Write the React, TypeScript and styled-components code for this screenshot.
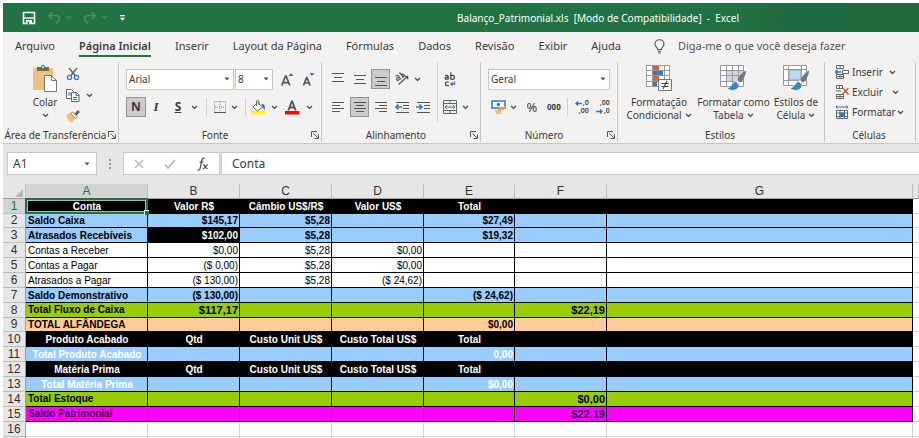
import React from "react";
import styled, { createGlobalStyle, css } from "styled-components";

const GlobalStyle = createGlobalStyle`
  *, *::before, *::after { box-sizing: border-box; }
  body { margin: 0; background: #fff; }
  button, input, select { font: inherit; color: inherit; margin: 0; }
`;

const ui = `"Noto Sans", "Open Sans", sans-serif`;
const sheetFont = `"Liberation Sans", Arial, sans-serif`;

const Window = styled.div`
  padding: 3px 0 0 3px;
  font: 10px/14px ${ui};
  color: #3b3a39;
`;

/* ---------- Title bar ---------- */

const TitleBar = styled.header`
  display: flex;
  align-items: center;
  height: 29px;
  color: #fff;
  background: radial-gradient(ellipse 34px 28px at 813px 16px, #1f6a41 96%, transparent 100%),
    linear-gradient(90deg, #217346 80%, #21683f 86%, #21683f 100%);
`;

const QuickAccess = styled.div`
  display: flex;
  align-items: center;
  gap: 11px;
  flex: 0 0 274px;
  padding-left: 19px;
`;

const QuickCluster = styled.div`
  display: flex;
  align-items: center;
  gap: 4px;
`;

const QuickButton = styled.button<{ $faded?: boolean }>`
  display: flex;
  align-items: center;
  justify-content: center;
  height: 20px;
  padding: 0;
  border: 0;
  background: none;
  color: ${(p) => (p.$faded ? "#4d9069" : "#fff")};
`;

const Title = styled.h1`
  flex: 1;
  margin: 0;
  font-size: 10px;
  line-height: 14px;
  font-weight: 400;
  text-align: center;
  white-space: pre;
`;

/* ---------- Tabs ---------- */

const Tabs = styled.nav`
  display: flex;
  align-items: flex-start;
  gap: 24px;
  height: 28px;
  padding: 5px 0 0 12px;
  background: #f3f2f1;
`;

const Tab = styled.button<{ $active?: boolean }>`
  flex: none;
  height: 20px;
  padding: 0;
  border: 0;
  border-bottom: 2px solid ${(p) => (p.$active ? "#217346" : "transparent")};
  background: none;
  font-size: 11px;
  line-height: 18px;
  font-weight: ${(p) => (p.$active ? 600 : 400)};
  white-space: nowrap;
`;

const TellMe = styled.button`
  display: flex;
  align-items: center;
  gap: 13px;
  height: 18px;
  margin-left: 9px;
  padding: 0;
  border: 0;
  background: none;
  font-size: 11px;
  line-height: 18px;
  white-space: nowrap;
  color: #555;
`;

/* ---------- Ribbon ---------- */

const Ribbon = styled.section`
  display: flex;
  padding: 2px 0 1px;
  background: #f3f2f1;
  border-bottom: 1px solid #c8c6c4;
`;

const GroupBox = styled.div<{ $w: number }>`
  display: grid;
  grid-template-rows: 66px 14px;
  flex: 0 0 ${(p) => p.$w}px;
  border-right: 1px solid #c8c6c4;
`;

const GroupFooter = styled.div`
  display: flex;
  align-items: center;
  padding-right: 2px;
`;

const GroupLabel = styled.span`
  flex: 1;
  text-align: center;
  font-size: 10px;
  line-height: 14px;
  white-space: nowrap;
`;

const Launcher = styled.button`
  display: flex;
  padding: 0;
  border: 0;
  background: none;
`;

const ToolStack = styled.div<{ $left?: number }>`
  display: flex;
  flex-direction: column;
  gap: 8px;
  padding: 7px 0 0 ${(p) => p.$left ?? 7}px;
`;

const ToolRow = styled.div`
  display: flex;
  align-items: center;
  height: 20px;
`;

const Columns = styled.div`
  display: flex;
`;

const Tool = styled.button<{ $w: number; $on?: boolean }>`
  display: flex;
  align-items: center;
  justify-content: center;
  flex: 0 0 ${(p) => p.$w}px;
  height: 20px;
  padding: 0;
  border: 1px solid transparent;
  background: none;
  ${(p) =>
    p.$on &&
    css`
      background: #cdcbc9;
      border-color: #979593;
    `}
`;

const Gap = styled.span<{ $w: number }>`
  flex: 0 0 ${(p) => p.$w}px;
`;

const Divider = styled.span<{ $w: number; $h?: number }>`
  flex: 0 0 ${(p) => p.$w}px;
  height: ${(p) => p.$h ?? 18}px;
  background: linear-gradient(#d2d0ce, #d2d0ce) center / 1px 100% no-repeat;
`;

const Glyph = styled.span<{ $size?: number; $bold?: boolean; $italic?: boolean; $under?: boolean }>`
  font-size: ${(p) => p.$size ?? 12}px;
  line-height: 16px;
  font-weight: ${(p) => (p.$bold ? 700 : 400)};
  font-style: ${(p) => (p.$italic ? "italic" : "normal")};
  font-family: ${(p) => (p.$italic ? `"Liberation Serif", serif` : ui)};
  text-decoration: ${(p) => (p.$under ? "underline" : "none")};
`;

const Combo = styled.label<{ $w: number }>`
  display: grid;
  align-items: center;
  flex: 0 0 ${(p) => p.$w}px;
  height: 21px;
  background: #fff;
  border: 1px solid #c8c6c4;
  > * { grid-area: 1 / 1; }
  > svg { justify-self: end; margin-right: 3px; pointer-events: none; }
`;

const ComboSelect = styled.select`
  appearance: none;
  width: 100%;
  height: 19px;
  padding: 0 2px;
  border: 0;
  background: none;
  font-size: 10px;
  outline: none;
`;

const PasteArea = styled.div`
  display: flex;
  gap: 5px;
  padding: 2px 0 0 27px;
`;

const LargeButton = styled.button<{ $w: number }>`
  display: flex;
  flex-direction: column;
  align-items: center;
  flex: 0 0 ${(p) => p.$w}px;
  padding: 0;
  border: 0;
  background: none;
  font-size: 10px;
  line-height: 13px;
  white-space: nowrap;
  > svg { flex: none; margin-bottom: 4px; }
`;

const LabelLine = styled.span`
  display: flex;
  align-items: center;
  justify-content: center;
  gap: 3px;
  height: 13px;
`;

const SmallStack = styled.div`
  display: flex;
  flex-direction: column;
  gap: 1px;
`;

const StyleButtons = styled.div`
  display: flex;
  padding: 3px 0 0 3px;
`;

const CellMenu = styled.div`
  display: flex;
  flex-direction: column;
  padding-left: 10px;
`;

const CellButton = styled.button`
  display: flex;
  align-items: center;
  gap: 3px;
  height: 20px;
  padding: 0;
  border: 0;
  background: none;
  font-size: 10px;
  white-space: nowrap;
`;

const CellText = styled.span<{ $w: number }>`
  width: ${(p) => p.$w}px;
  text-align: left;
`;

/* ---------- Formula bar ---------- */

const FormulaBar = styled.div`
  display: flex;
  align-items: center;
  padding: 8px 0 9px 4px;
  background: #e6e6e6;
`;

const NameBox = styled.label`
  display: flex;
  align-items: center;
  flex: 0 0 90px;
  height: 23px;
  padding: 0 6px 0 5px;
  background: #fff;
  border: 1px solid #c8c8c8;
`;

const BarInput = styled.input`
  flex: 1;
  min-width: 0;
  width: 100%;
  height: 21px;
  padding: 0;
  border: 0;
  background: none;
  font-size: 12px;
  outline: none;
`;

const Dots = styled.span`
  flex: 0 0 26px;
  display: flex;
  justify-content: center;
`;

const FormulaTools = styled.div`
  display: flex;
  align-items: center;
  justify-content: space-around;
  flex: 0 0 97px;
  height: 23px;
  background: #fff;
  border: 1px solid #c8c8c8;
`;

const IconButton = styled.button`
  display: flex;
  padding: 0;
  border: 0;
  background: none;
`;

const FormulaField = styled.label`
  display: flex;
  flex: 1;
  min-width: 0;
  height: 23px;
  margin-left: 1px;
  padding-left: 10px;
  background: #fff;
  border: 1px solid #c8c8c8;
  border-right: 0;
`;

/* ---------- Sheet ---------- */

const Sheet = styled.table`
  width: 100%;
  table-layout: fixed;
  border-collapse: separate;
  border-spacing: 0;
  background: #fff;
  font-family: ${sheetFont};
  color: #000;
`;

const Col = styled.col<{ $w?: number }>`
  width: ${(p) => (p.$w ? `${p.$w}px` : "auto")};
`;

const ColHead = styled.th<{ $on?: boolean }>`
  height: 15px;
  padding: 0;
  background: ${(p) => (p.$on ? "#d2d2d2" : "#e6e6e6")};
  border-right: 1px solid #bdbdbd;
  border-bottom: 1px solid ${(p) => (p.$on ? "#217346" : "#9f9f9f")};
  font-size: 12px;
  line-height: 14px;
  font-weight: 400;
  color: ${(p) => (p.$on ? "#217346" : "#333")};
`;

const Corner = styled(ColHead)`
  > svg { display: block; margin: 3px 2px 0 auto; }
`;

const RowHead = styled.th<{ $on?: boolean }>`
  padding: 0;
  background: ${(p) => (p.$on ? "#d2d2d2" : "#e6e6e6")};
  border-right: 1px solid ${(p) => (p.$on ? "#217346" : "#9f9f9f")};
  border-bottom: 1px solid #bdbdbd;
  font-size: 12px;
  line-height: 13px;
  font-weight: 400;
  color: ${(p) => (p.$on ? "#217346" : "#333")};
`;

type Tone = "head" | "blue" | "plain" | "green" | "peach" | "ghost" | "pink" | "blank";

const toneBg: Record<Tone, string> = {
  head: "#000",
  blue: "#99ccff",
  plain: "#fff",
  green: "#99cc00",
  peach: "#ffcc99",
  ghost: "#99ccff",
  pink: "#ff00ff",
  blank: "#fff",
};

const Row = styled.tr<{ $h: number }>`
  height: ${(p) => p.$h}px;
`;

const Cell = styled.td<{ $tone: Tone; $inverse?: boolean; $first?: boolean }>`
  position: relative;
  padding: ${(p) => (p.$tone === "green" || p.$tone === "pink" ? 0 : 1)}px 1px 0 2px;
  background: ${(p) => (p.$inverse ? "#000" : toneBg[p.$tone])};
  color: ${(p) =>
    p.$inverse || p.$tone === "head" || p.$tone === "ghost"
      ? "#fff"
      : p.$tone === "pink"
      ? "#3a0045"
      : "#000"};
  border-right: 1px solid ${(p) => (p.$tone === "blank" ? "#d4d4d4" : "#000")};
  border-bottom: 1px solid ${(p) => (p.$tone === "blank" ? "#d4d4d4" : "#000")};
  font-size: ${(p) => (!p.$first && (p.$tone === "green" || p.$tone === "pink") ? 11 : 10)}px;
  line-height: 12px;
  font-weight: ${(p) => (p.$tone === "plain" ? 400 : 700)};
  text-align: ${(p) =>
    p.$tone === "head" || (p.$first && p.$tone === "ghost") ? "center" : p.$first ? "left" : "right"};
  white-space: nowrap;
`;

const Outside = styled.td`
  padding: 0;
  border-bottom: 1px solid #d4d4d4;
`;

const SheetEnd = styled.td<{ $head?: boolean }>`
  height: 2px;
  padding: 0;
  background: ${(p) => (p.$head ? "#e6e6e6" : "#fff")};
  border-right: 1px solid ${(p) => (p.$head ? "#9f9f9f" : "#d4d4d4")};
`;

const Selection = styled.span`
  position: absolute;
  inset: -1px -1px -1px -1px;
  border: 2px solid #217346;
  box-shadow: inset 0 0 0 1px #a9b8ae;
  z-index: 1;
  &::after {
    content: "";
    position: absolute;
    right: -3px;
    bottom: -3px;
    width: 5px;
    height: 5px;
    background: #217346;
    border: solid #fff;
    border-width: 1px 0 0 1px;
  }
`;

/* ---------- Icons ---------- */

const Chevron = ({ c = "#444" }: { c?: string }) => (
  <svg width="7" height="5" viewBox="0 0 7 5" fill="none" stroke={c} strokeWidth="1.2">
    <path d="M1 1l2.5 2.5L6 1" />
  </svg>
);

const Caret = () => (
  <svg width="6" height="4" viewBox="0 0 6 4" fill="#555">
    <path d="M.5.5h5L3 3.5z" />
  </svg>
);

const SaveIcon = () => (
  <svg width="14" height="14" viewBox="0 0 14 14">
    <path d="M1.5 1.5h11v11h-11z" fill="none" stroke="currentColor" strokeWidth="1.6" />
    <path d="M1.5 7h11" stroke="currentColor" strokeWidth="1.4" />
    <path d="M4 9h6v4H4z" fill="currentColor" />
    <path d="M5.6 10.5h1.6V13H5.6z" fill="#217346" />
  </svg>
);

const UndoIcon = ({ flip }: { flip?: boolean }) => (
  <svg width="14" height="13" viewBox="0 0 14 13" fill="none" stroke="currentColor" strokeWidth="1.7">
    <g transform={flip ? "matrix(-1 0 0 1 14 0)" : undefined}>
      <path d="M5.5 1L1.8 4.5 5.5 8" />
      <path d="M2 4.5h6.5c5 0 5 6.5.2 7.3" />
    </g>
  </svg>
);

const CustomizeIcon = () => (
  <svg width="7" height="8" viewBox="0 0 7 8" fill="currentColor">
    <path d="M1 1h5v1.2H1zM.8 3.8h5.4L3.5 6.8z" />
  </svg>
);

const BulbIcon = () => (
  <svg width="11" height="15" viewBox="0 0 11 15" fill="none" stroke="#555" strokeWidth="1.1">
    <path d="M3.6 10.5c0-2-2.6-2.8-2.6-5.5a4.5 4.3 0 0 1 9 0c0 2.7-2.6 3.5-2.6 5.5zM3.6 12.2h3.8M4.1 14h2.8" />
  </svg>
);

const LaunchIcon = () => (
  <svg width="8" height="8" viewBox="0 0 8 8" fill="none" stroke="#555">
    <path d="M.5 6V.5H6M2.5 2.5L7 7M7.5 3.5v4h-4" />
  </svg>
);

const PasteIcon = () => (
  <svg width="26" height="28" viewBox="0 0 26 28">
    <path d="M1 4h20v22H1z" fill="#ebc27c" />
    <path d="M5 3h4c0-3 4-3 4 0h4v4H5z" fill="#6b6b6b" />
    <circle cx="11" cy="3" r="1" fill="#f3f2f1" />
    <path d="M12.5 11.5h7l5 5v11h-12z" fill="#fff" stroke="#777" />
    <path d="M19.5 11.5v5h5" fill="none" stroke="#777" />
  </svg>
);

const CutIcon = () => (
  <svg width="14" height="14" viewBox="0 0 14 14" fill="none" strokeWidth="1.5">
    <path d="M3 1l6.5 8M11 1L4.5 9" stroke="#666" />
    <circle cx="3.5" cy="10.5" r="2.1" stroke="#3b78b5" strokeWidth="1.3" />
    <circle cx="10.5" cy="10.5" r="2.1" stroke="#3b78b5" strokeWidth="1.3" />
  </svg>
);

const CopyIcon = () => (
  <svg width="14" height="13" viewBox="0 0 14 13" stroke="#666" fill="#fff">
    <path d="M.5.5h5l2 2v7h-7z" />
    <path d="M2 4h3M2 6h3" stroke="#3b78b5" />
    <path d="M5.5 3.5h5l2.5 2.5v6.5h-7.5z" />
    <path d="M10 3.5v3h3" fill="none" />
    <path d="M7 8.5h4M7 10.5h4" stroke="#3b78b5" />
  </svg>
);

const BrushIcon = () => (
  <svg width="14" height="13" viewBox="0 0 14 13">
    <path d="M0 5l4-2 5 5-3 5C3 12 1 8 0 5z" fill="#ebc27c" />
    <path d="M4.5 3.5l2-1.5 4.5 4.5-1.5 2z" fill="#fff" stroke="#666" strokeWidth=".8" />
    <path d="M8.5 3.5L12 0l2 2-3.5 3.5z" fill="#666" />
  </svg>
);

const SizeIcon = ({ down }: { down?: boolean }) => (
  <svg width="13" height="15" viewBox="0 0 13 15" fill="none">
    <path
      d={down ? "M1.5 13.5L4.6 5.5h.4l3.1 8M2.7 11h4.2" : "M.8 13.5L4.5 4h.6l3.7 9.5M2.2 10.7h5.2"}
      stroke="#555"
      strokeWidth="1.7"
    />
    <path d={down ? "M7.5 1h5L10 4z" : "M7.5 4h5L10 1z"} fill="#3b78b5" />
  </svg>
);

const BordersIcon = () => (
  <svg width="12" height="12" viewBox="0 0 12 12" fill="none" stroke="#8a8886">
    <path d="M.5.5h11v11H.5zM6 1v10M1 6h10" strokeDasharray="1 1" />
    <path d="M0 11.5h12" stroke="#555" />
  </svg>
);

const FillIcon = () => (
  <svg width="16" height="15" viewBox="0 0 16 15">
    <path d="M0 11h15v3.5H0z" fill="#ffff00" />
    <path d="M6.5 2.5l5 4.5-5 4-4.5-4z" fill="#fff" stroke="#666" />
    <path d="M5.5 6V1.5c0-1.5 2.5-1.5 2.5 0V5" fill="none" stroke="#666" />
    <path d="M10.5 4c3-.5 4 2 3 6.5-1-2-1.5-3-2.5-4z" fill="#3b78b5" />
  </svg>
);

const FontColorIcon = () => (
  <svg width="15" height="15" viewBox="0 0 15 15" fill="none">
    <path d="M0 11h14v3.5H0z" fill="#f00" />
    <path d="M3.3 10.5L6.8 1.5h.4l3.5 9M4.7 7.5h4.6" stroke="#555" strokeWidth="1.8" />
  </svg>
);

const Lines = ({ rows }: { rows: [number, number, number][] }) => (
  <svg width="14" height="14" viewBox="0 0 14 14" stroke="#555">
    {rows.map(([x, y, w]) => (
      <path key={y} d={`M${x} ${y + 0.5}h${w}`} />
    ))}
  </svg>
);

const OrientIcon = () => (
  <svg width="15" height="14" viewBox="0 0 15 14" fill="none" stroke="#555" strokeWidth="1.2">
    <path d="M1.5 4.5c1-1.5 2-1.5 3-.3L7 7.5M4.8 5.3c-2 .2-3 1.5-2 2.5s2.3.3 2.7-1.2" />
    <path d="M5.5.5l4.2 5M7.3 2.8c1.5-1.5 3.5 0 2.8 1.4-.5 1-1.5 1.2-2 .8" />
    <path d="M4.5 12.5l9-8M10.5 4.3h3.2v3.2" />
  </svg>
);

const WrapIcon = () => (
  <svg width="13" height="15" viewBox="0 0 13 15" fill="none" stroke="#444" strokeWidth="1.3">
    <path d="M1.2 3.7c1.2-.8 3-.6 3 .8v3M4.2 5.3c-2-.2-3.2.2-3.1 1.2s2.3 1.2 3.1 0" />
    <path d="M6.8.5v7M6.8 4.2c1-1.3 3.6-1 3.6 1.2S7.8 8 6.8 6.6" />
    <path d="M4.7 10.2c-1.5-.9-3.3-.2-3.3 1.5s1.8 2.4 3.3 1.5" />
    <path d="M10.5 9.5v2.5H7M8.5 10.5L7 12l1.5 1.5" stroke="#3b78b5" />
  </svg>
);

const IndentIcon = ({ right }: { right?: boolean }) => (
  <svg width="15" height="13" viewBox="0 0 15 13" fill="none" stroke="#555">
    <path d="M1 1.5h13M8 4.5h6M8 7.5h6M1 11.5h13" />
    <path
      d={right ? "M0 6h6M3.5 3.5L6 6 3.5 8.5" : "M1 6h6M3.5 3.5L1 6l2.5 2.5"}
      stroke="#3b78b5"
      strokeWidth="1.6"
    />
  </svg>
);

const MergeIcon = () => (
  <svg width="14" height="14" viewBox="0 0 14 14" fill="none" stroke="#666">
    <path d="M.5.5h13v13H.5zM.5 3.5h13M.5 10.5h13M7 .5v3M7 10.5v3" />
    <path d="M2 7h10M4 5L2 7l2 2M10 5l2 2-2 2" stroke="#3b78b5" />
  </svg>
);

const MoneyIcon = () => (
  <svg width="15" height="14" viewBox="0 0 15 14" fill="none">
    <path d="M1 1h13v7H1z" fill="#fff" stroke="#3b78b5" strokeWidth="1.5" />
    <circle cx="7.5" cy="4.5" r="1.7" fill="#3b78b5" />
    <path d="M8 7.5h6M7 9.5h6M4 11h6M5 13h5" stroke="#ebb25c" strokeWidth="1.5" />
  </svg>
);

const DecimalBox = styled.span`
  display: grid;
  grid-template-columns: 6px 8px;
  align-items: center;
  justify-items: end;
  font-size: 7px;
  line-height: 8px;
  font-weight: 600;
  > svg { display: block; justify-self: start; }
`;

const Wide = styled.span`
  grid-column: 1 / 3;
`;

const BlueArrow = ({ right }: { right?: boolean }) => (
  <svg width="7" height="5" viewBox="0 0 7 5" fill="none" stroke="#3b78b5" strokeWidth="1.4">
    <path d={right ? "M0 2.5h6M4 .5l2 2-2 2" : "M1 2.5h6M3 .5l-2 2 2 2"} />
  </svg>
);

const GridBase = () => (
  <>
    <path d="M.5.5h23v21H.5z" fill="#fff" />
    <path d="M.5.5h23v21H.5zM6.5.5v21M12.5.5v21M18.5.5v21M.5 5.5h23M.5 10.5h23M.5 16.5h23" fill="none" stroke="#999" />
  </>
);

const ConditionalIcon = () => (
  <svg width="27" height="27" viewBox="0 0 27 27">
    <GridBase />
    <path d="M7 1h6v4H7zM7 11h6v5H7z" fill="#d9603b" />
    <path d="M7 6h10v4H7zM7 17h4v4H7z" fill="#3b78b5" />
    <path d="M12.5 14.5h13v11h-13z" fill="#fff" stroke="#777" />
    <path d="M15.5 18.5h7M15.5 21.5h7M21 16l-4 8" stroke="#444" strokeWidth="1.1" />
  </svg>
);

const PaintBrush = () => (
  <>
    <path d="M26 5.5c-4 2-7 6-9 10l3 2.5c3-3 6-8 6-12.5z" fill="#777" />
    <path d="M16.5 15.5l3.5 3" stroke="#fff" strokeWidth="1.5" />
    <path d="M16 16.5c-4 .5-3.5 5-9 7 4 3 12 2.5 12-3.5z" fill="#3b82c4" stroke="#fff" strokeWidth=".6" />
  </>
);

const TableStyleIcon = () => (
  <svg width="27" height="27" viewBox="0 0 27 27">
    <GridBase />
    <path d="M7 6h5v4H7zM13 6h5v4h-5zM19 6h4v4h-4zM7 11h5v5H7zM13 11h5v5h-5zM19 11h4v5h-4z" fill="#c3d8ee" />
    <PaintBrush />
  </svg>
);

const CellStyleIcon = () => (
  <svg width="27" height="27" viewBox="0 0 27 27">
    <path d="M.5.5h23v20H.5z" fill="#fff" stroke="#999" />
    <path d="M5.5.5v20M.5 4.5h23M18.5.5v20M.5 15.5h23" stroke="#999" />
    <path d="M6 5h12v10H6z" fill="#c3d8ee" stroke="#7ea7d0" />
    <PaintBrush />
  </svg>
);

const InsertIcon = () => (
  <svg width="14" height="14" viewBox="0 0 14 14" fill="#fff" stroke="#666">
    <path d="M1.5.5h7v3h-7zM5 .5v3M1.5 9.5h7v4h-7zM5 9.5v4M1.5 11.5h7" />
    <path d="M7.5 5.5h6v3h-6z" />
    <path d="M0 7h6M2.5 4.8L.5 7l2 2.2" fill="none" stroke="#3b78b5" strokeWidth="1.3" />
  </svg>
);

const DeleteIcon = () => (
  <svg width="14" height="14" viewBox="0 0 14 14" fill="#fff" stroke="#666">
    <path d="M1.5.5h6v3h-6zM4.5.5v3M1.5 9.5h7v4h-7zM5 9.5v4M1.5 11.5h7M1 6h5" />
    <path d="M7.5 3l6 6.5M13.5 3l-6 6.5" fill="none" stroke="#d9552f" strokeWidth="1.5" />
  </svg>
);

const FormatIcon = () => (
  <svg width="14" height="15" viewBox="0 0 14 15" fill="none" stroke="#666">
    <path d="M1 2h12M2.5.5L1 2l1.5 1.5M11.5.5L13 2l-1.5 1.5" stroke="#3b78b5" />
    <path d="M1.5 5.5h11v8h-11zM5 5.5v8M9.5 5.5v8M1.5 8h11M1.5 11.5h11" fill="#fff" />
    <path d="M5 8h4.5v3.5H5z" fill="#3b78b5" stroke="#3b78b5" />
  </svg>
);

/* ---------- Ribbon group ---------- */

const Group = ({
  w,
  label,
  launch,
  children,
}: {
  w: number;
  label: string;
  launch?: boolean;
  children: React.ReactNode;
}) => (
  <GroupBox $w={w} role="group" aria-label={label}>
    {children}
    <GroupFooter>
      <GroupLabel>{label}</GroupLabel>
      {launch && (
        <Launcher aria-label={`Opções de ${label}`}>
          <LaunchIcon />
        </Launcher>
      )}
    </GroupFooter>
  </GroupBox>
);

const More = ({ w, label }: { w: number; label: string }) => (
  <Tool $w={w} aria-label={label}>
    <Chevron />
  </Tool>
);

/* ---------- Sheet data ---------- */

type RowData = { tone: Tone; h?: number; cells: string[]; inverse?: number };

const rows: RowData[] = [
  { tone: "head", cells: ["Conta", "Valor R$", "Câmbio US$/R$", "Valor US$", "Total"] },
  { tone: "blue", h: 14, cells: ["Saldo Caixa", "$145,17", "$5,28", "", "$27,49"] },
  { tone: "blue", cells: ["Atrasados Recebíveis", "$102,00", "$5,28", "", "$19,32"], inverse: 1 },
  { tone: "plain", cells: ["Contas a Receber", "$0,00", "$5,28", "$0,00"] },
  { tone: "plain", cells: ["Contas a Pagar", "($ 0,00)", "$5,28", "$0,00"] },
  { tone: "plain", cells: ["Atrasados a Pagar", "($ 130,00)", "$5,28", "($ 24,62)"] },
  { tone: "blue", cells: ["Saldo Demonstrativo", "($ 130,00)", "", "", "($ 24,62)"] },
  { tone: "green", cells: ["Total Fluxo de Caixa", "$117,17", "", "", "", "$22,19"] },
  { tone: "peach", h: 14, cells: ["TOTAL ALFÂNDEGA", "", "", "", "$0,00"] },
  { tone: "head", cells: ["Produto Acabado", "Qtd", "Custo Unit US$", "Custo Total US$", "Total"] },
  { tone: "ghost", cells: ["Total Produto Acabado", "", "", "", "0,00"] },
  { tone: "head", cells: ["Matéria Prima", "Qtd", "Custo Unit US$", "Custo Total US$", "Total"] },
  { tone: "ghost", cells: ["Total Matéria Prima", "", "", "", "$0,00"] },
  { tone: "green", cells: ["Total Estoque", "", "", "", "", "$0,00"] },
  { tone: "pink", cells: ["Saldo Patrimonial", "", "", "", "", "$22,19"] },
  { tone: "blank", cells: [] },
];

const letters = ["A", "B", "C", "D", "E", "F", "G"];
const tabs = ["Arquivo", "Página Inicial", "Inserir", "Layout da Página", "Fórmulas", "Dados", "Revisão", "Exibir", "Ajuda"];

export default function App() {
  return (
    <Window>
      <GlobalStyle />
      <TitleBar>
        <QuickAccess>
          <QuickButton aria-label="Salvar"><SaveIcon /></QuickButton>
          <QuickCluster>
            <QuickButton $faded aria-label="Desfazer"><UndoIcon /></QuickButton>
            <QuickButton $faded aria-label="Lista desfazer"><Chevron c="currentColor" /></QuickButton>
          </QuickCluster>
          <QuickCluster>
            <QuickButton $faded aria-label="Refazer"><UndoIcon flip /></QuickButton>
            <QuickButton $faded aria-label="Lista refazer"><Chevron c="currentColor" /></QuickButton>
          </QuickCluster>
          <QuickButton aria-label="Personalizar"><CustomizeIcon /></QuickButton>
        </QuickAccess>
        <Title>{"Balanço_Patrimonial.xls  [Modo de Compatibilidade]  -  Excel"}</Title>
      </TitleBar>

      <Tabs>
        {tabs.map((t) => (
          <Tab key={t} $active={t === "Página Inicial"}>{t}</Tab>
        ))}
        <TellMe>
          <BulbIcon />
          Diga-me o que você deseja fazer
        </TellMe>
      </Tabs>

      <Ribbon>
        <Group w={116} label="Área de Transferência" launch>
          <PasteArea>
            <LargeButton $w={30}>
              <PasteIcon />
              <LabelLine>Colar</LabelLine>
              <LabelLine><Chevron /></LabelLine>
            </LargeButton>
            <SmallStack>
              <ToolRow><Tool $w={14} aria-label="Recortar"><CutIcon /></Tool></ToolRow>
              <ToolRow>
                <Tool $w={14} aria-label="Copiar"><CopyIcon /></Tool>
                <More w={16} label="Opções de cópia" />
              </ToolRow>
              <ToolRow><Tool $w={14} aria-label="Pincel de formatação"><BrushIcon /></Tool></ToolRow>
            </SmallStack>
          </PasteArea>
        </Group>

        <Group w={203} label="Fonte" launch>
          <ToolStack>
            <ToolRow>
              <Combo $w={108}>
                <ComboSelect aria-label="Fonte" defaultValue="Arial"><option>Arial</option></ComboSelect>
                <Caret />
              </Combo>
              <Gap $w={1} />
              <Combo $w={38}>
                <ComboSelect aria-label="Tamanho da fonte" defaultValue="8"><option>8</option></ComboSelect>
                <Caret />
              </Combo>
              <Gap $w={4} />
              <Tool $w={20} aria-label="Aumentar fonte"><SizeIcon /></Tool>
              <Tool $w={22} aria-label="Diminuir fonte"><SizeIcon down /></Tool>
            </ToolRow>
            <ToolRow>
              <Tool $w={20} $on aria-label="Negrito"><Glyph $bold>N</Glyph></Tool>
              <Tool $w={20} aria-label="Itálico"><Glyph $size={13} $bold $italic>I</Glyph></Tool>
              <Tool $w={24} aria-label="Sublinhado"><Glyph $bold $under>S</Glyph></Tool>
              <More w={8} label="Opções de sublinhado" />
              <Divider $w={14} />
              <Tool $w={14} aria-label="Bordas"><BordersIcon /></Tool>
              <More w={14} label="Opções de bordas" />
              <Divider $w={8} />
              <Tool $w={20} aria-label="Cor de preenchimento"><FillIcon /></Tool>
              <More w={10} label="Opções de preenchimento" />
              <Tool $w={26} aria-label="Cor da fonte"><FontColorIcon /></Tool>
              <More w={8} label="Opções de cor da fonte" />
            </ToolRow>
          </ToolStack>
        </Group>

        <Group w={159} label="Alinhamento" launch>
          <Columns>
            <ToolStack $left={6}>
              <ToolRow>
                <Tool $w={20} aria-label="Alinhar em cima"><Lines rows={[[1, 1, 12], [3, 5, 8], [1, 9, 12]]} /></Tool>
                <Tool $w={23} aria-label="Alinhar no meio"><Lines rows={[[1, 3, 12], [3, 7, 8], [1, 11, 12]]} /></Tool>
                <Tool $w={19} $on aria-label="Alinhar embaixo"><Lines rows={[[1, 5, 12], [3, 9, 8], [1, 13, 12]]} /></Tool>
                <Tool $w={23} aria-label="Orientação"><OrientIcon /></Tool>
                <More w={8} label="Opções de orientação" />
              </ToolRow>
              <ToolRow>
                <Tool $w={20} aria-label="Alinhar à esquerda"><Lines rows={[[1, 2, 12], [1, 5, 8], [1, 8, 12], [1, 11, 8]]} /></Tool>
                <Gap $w={2} />
                <Tool $w={19} $on aria-label="Centralizar"><Lines rows={[[1, 2, 12], [3, 5, 8], [1, 8, 12], [3, 11, 8]]} /></Tool>
                <Tool $w={24} aria-label="Alinhar à direita"><Lines rows={[[1, 2, 12], [5, 5, 8], [1, 8, 12], [5, 11, 8]]} /></Tool>
                <Tool $w={18} aria-label="Diminuir recuo"><IndentIcon /></Tool>
                <Tool $w={24} aria-label="Aumentar recuo"><IndentIcon right /></Tool>
              </ToolRow>
            </ToolStack>
            <Divider $w={4} $h={60} />
            <ToolStack $left={0}>
              <ToolRow><Tool $w={22} aria-label="Quebrar texto"><WrapIcon /></Tool></ToolRow>
              <ToolRow>
                <Tool $w={22} aria-label="Mesclar e centralizar"><MergeIcon /></Tool>
                <More w={8} label="Opções de mesclagem" />
              </ToolRow>
            </ToolStack>
          </Columns>
        </Group>

        <Group w={137} label="Número" launch>
          <ToolStack>
            <ToolRow>
              <Combo $w={122}>
                <ComboSelect aria-label="Formato de número" defaultValue="Geral"><option>Geral</option></ComboSelect>
                <Caret />
              </Combo>
            </ToolRow>
            <ToolRow>
              <Tool $w={20} aria-label="Formato de contabilização"><MoneyIcon /></Tool>
              <More w={10} label="Opções de moeda" />
              <Tool $w={28} aria-label="Porcentagem"><Glyph $size={13}>%</Glyph></Tool>
              <Tool $w={14} aria-label="Separador de milhares"><Glyph $size={8} $bold>000</Glyph></Tool>
              <Divider $w={12} />
              <Tool $w={16} aria-label="Aumentar casas decimais">
                <DecimalBox><BlueArrow /><span>,0</span><Wide>,00</Wide></DecimalBox>
              </Tool>
              <Tool $w={26} aria-label="Diminuir casas decimais">
                <DecimalBox><Wide>,00</Wide><BlueArrow right /><span>,0</span></DecimalBox>
              </Tool>
            </ToolRow>
          </ToolStack>
        </Group>

        <Group w={207} label="Estilos">
          <StyleButtons>
            <LargeButton $w={76}>
              <ConditionalIcon />
              <LabelLine>Formatação</LabelLine>
              <LabelLine>Condicional <Chevron /></LabelLine>
            </LargeButton>
            <LargeButton $w={73}>
              <TableStyleIcon />
              <LabelLine>Formatar como</LabelLine>
              <LabelLine>Tabela <Chevron /></LabelLine>
            </LargeButton>
            <LargeButton $w={52}>
              <CellStyleIcon />
              <LabelLine>Estilos de</LabelLine>
              <LabelLine>Célula <Chevron /></LabelLine>
            </LargeButton>
          </StyleButtons>
        </Group>

        <Group w={91} label="Células">
          <CellMenu>
            <CellButton><InsertIcon /><CellText $w={34}>Inserir</CellText><Chevron /></CellButton>
            <CellButton><DeleteIcon /><CellText $w={37}>Excluir</CellText><Chevron /></CellButton>
            <CellButton><FormatIcon /><CellText $w={42}>Formatar</CellText><Chevron /></CellButton>
          </CellMenu>
        </Group>
      </Ribbon>

      <FormulaBar>
        <NameBox>
          <BarInput aria-label="Caixa de nome" defaultValue="A1" />
          <Caret />
        </NameBox>
        <Dots>
          <svg width="2" height="12" viewBox="0 0 2 12" fill="#999">
            <path d="M0 1h2v2H0zM0 5h2v2H0zM0 9h2v2H0z" />
          </svg>
        </Dots>
        <FormulaTools>
          <IconButton aria-label="Cancelar">
            <svg width="10" height="10" viewBox="0 0 10 10" stroke="#b5b5b5" strokeWidth="1.5"><path d="M1 1l8 8M9 1L1 9" /></svg>
          </IconButton>
          <IconButton aria-label="Inserir">
            <svg width="12" height="10" viewBox="0 0 12 10" fill="none" stroke="#b5b5b5" strokeWidth="1.7"><path d="M1 5.5L4 9l7-8" /></svg>
          </IconButton>
          <IconButton aria-label="Inserir função">
            <svg width="12" height="14" viewBox="0 0 12 14" fill="none" stroke="#444" strokeWidth="1.2">
              <path d="M7.5 1.5C5.5.5 5 2 4.600 4L3.200 11c-.4 2-1.400 2.400-2.700 1.700M2.500 5h4M6 8c2-1 2 4 4.500 3.500M11 7.800c-2-.5-2.500 4-5 3.800" />
            </svg>
          </IconButton>
        </FormulaTools>
        <FormulaField>
          <BarInput aria-label="Barra de fórmulas" defaultValue="Conta" />
        </FormulaField>
      </FormulaBar>

      <Sheet>
        <colgroup>
          <Col $w={23} />
          <Col $w={122} />
          <Col $w={92} />
          <Col $w={92} />
          <Col $w={92} />
          <Col $w={91} />
          <Col $w={92} />
          <Col />
          <Col $w={6} />
        </colgroup>
        <thead>
          <tr>
            <Corner>
              <svg width="8" height="8" viewBox="0 0 8 8" fill="#b5b5b5"><path d="M8 0v8H0z" /></svg>
            </Corner>
            {letters.map((l) => (
              <ColHead key={l} scope="col" $on={l === "A"}>{l}</ColHead>
            ))}
            <ColHead />
          </tr>
        </thead>
        <tbody>
          {rows.map((r, i) => (
            <Row key={i} $h={r.h ?? 15}>
              <RowHead scope="row" $on={i === 0}>{i + 1}</RowHead>
              {letters.map((l, c) => (
                <Cell key={l} $tone={r.tone} $first={c === 0} $inverse={r.inverse === c}>
                  {r.cells[c]}
                  {i === 0 && c === 0 && <Selection />}
                </Cell>
              ))}
              <Outside />
            </Row>
          ))}
          <tr>
            <SheetEnd $head />
            {letters.map((l) => (
              <SheetEnd key={l} />
            ))}
          </tr>
        </tbody>
      </Sheet>
    </Window>
  );
}
